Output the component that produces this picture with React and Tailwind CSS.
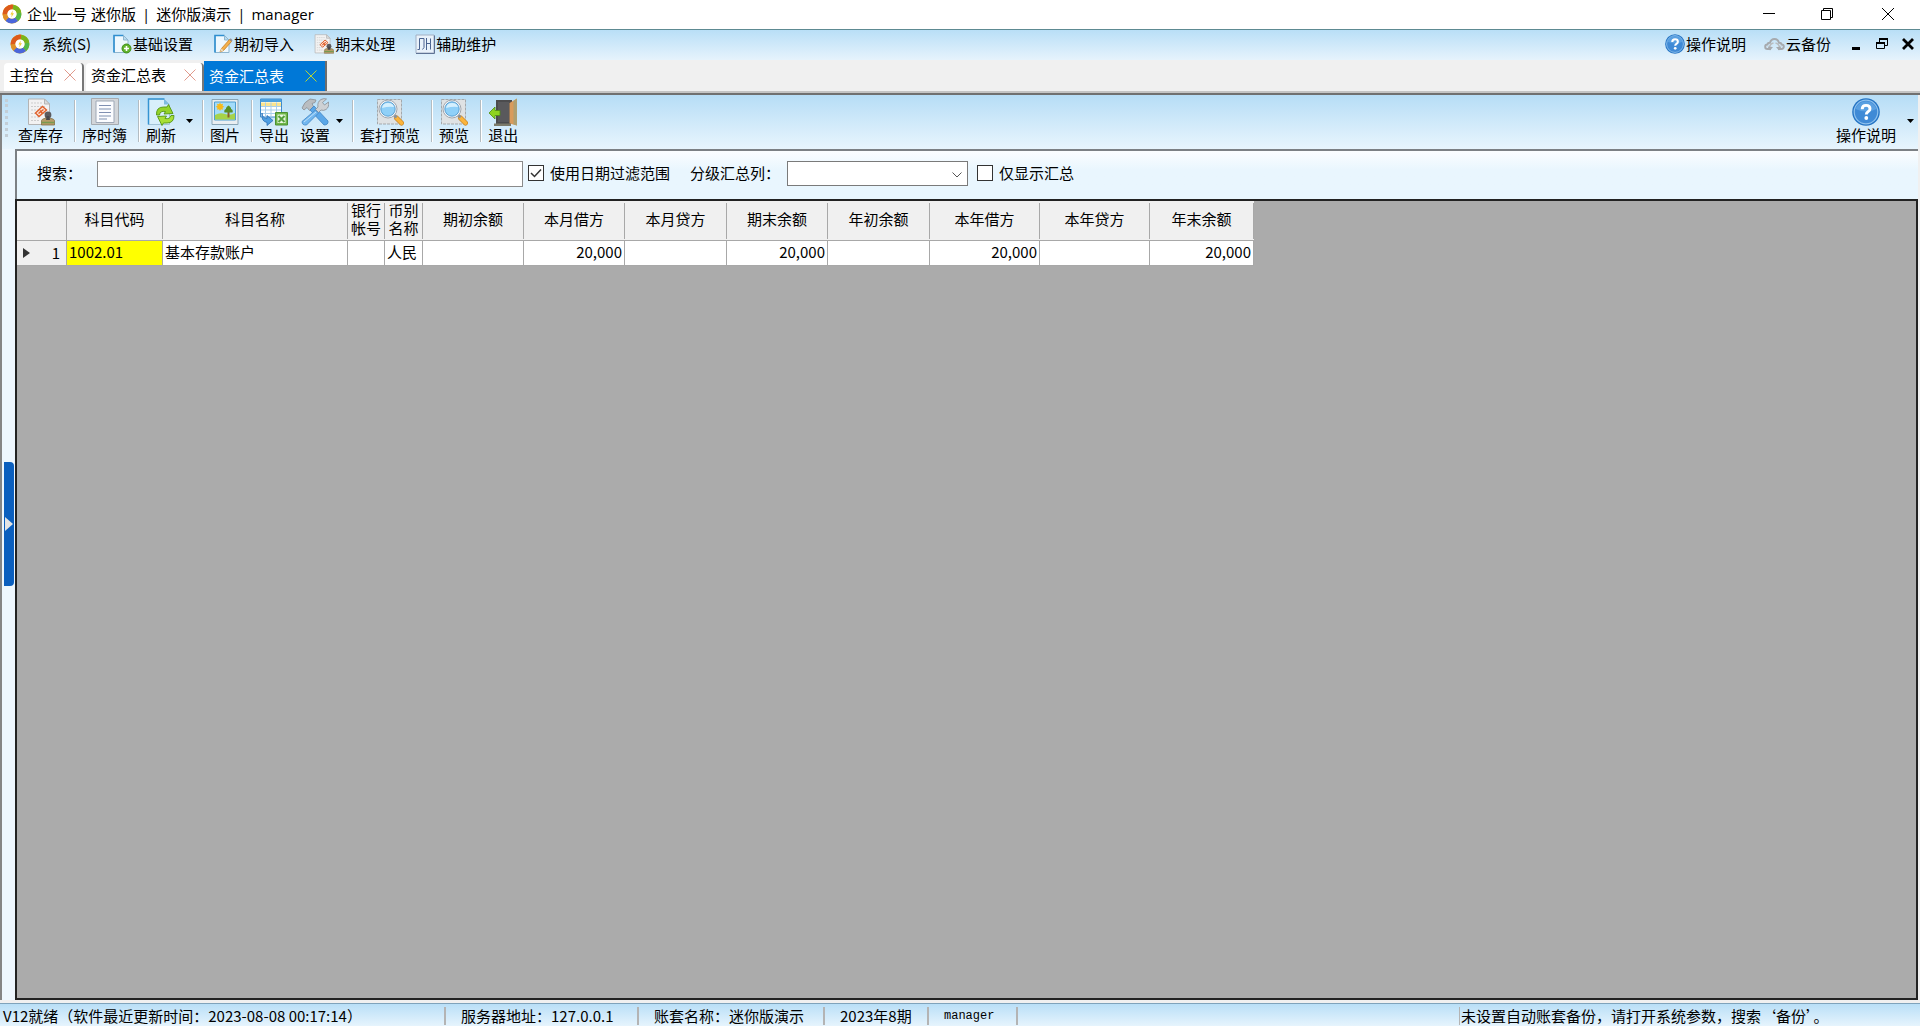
import { useState } from "react";

const columns = [
  { title: "科目代码", width: "w-[96px]" },
  { title: "科目名称", width: "w-[185px]" },
  { title: "银行帐号", width: "w-[37px]" },
  { title: "币别名称", width: "w-[38px]" },
  { title: "期初余额", width: "w-[101px]", number: true },
  { title: "本月借方", width: "w-[101px]", number: true },
  { title: "本月贷方", width: "w-[102px]", number: true },
  { title: "期末余额", width: "w-[101px]", number: true },
  { title: "年初余额", width: "w-[102px]", number: true },
  { title: "本年借方", width: "w-[110px]", number: true },
  { title: "本年贷方", width: "w-[110px]", number: true },
  { title: "年末余额", width: "w-[104px]", number: true },
];

const rows = [
  ["1002.01", "基本存款账户", "", "人民", "", "20,000", "", "20,000", "", "20,000", "", "20,000"],
];

function LogoIcon() {
  return (
    <svg className="size-5 shrink-0" viewBox="0 0 20 20" fill="none" strokeWidth="4.8">
      <circle cx="10" cy="10" r="7" stroke="#e8b21c" />
      <path d="M3 10.500A7 7 0 0 1 11 3.100" stroke="#dc5a1c" />
      <path d="M11 3.100A7 7 0 0 1 16.900 9" stroke="#78b41e" />
      <path d="M16.900 9A7 7 0 0 1 14.500 15.300" stroke="#52b848" />
      <path d="M14.500 15.300A7 7 0 0 1 5 15" stroke="#4a66dc" />
      <path d="M5 15A7 7 0 0 1 3 10.500" stroke="#e0902a" />
      <circle cx="10" cy="10" r="4.600" fill="#fff" />
      <path d="M10.800 6.500 8.300 10.500h1.500l-.6 3 2.800-4.200h-1.600z" fill="#f0cf3a" />
    </svg>
  );
}

function Page({ children }) {
  return (
    <svg className="size-5 shrink-0" viewBox="0 0 20 20">
      <path d="M2 1.500h9.500l4.500 4.500v12.500h-14z" fill="#eef8fe" stroke="#8fb6cf" />
      <path d="M2 18.500v-17h9.500" fill="none" stroke="#2f8fd0" strokeWidth="1.600" />
      <path d="M11.500 1.500v4.500h4.500z" fill="#b7dcf2" stroke="#8fb6cf" />
      {children}
    </svg>
  );
}

function PageAddIcon() {
  return (
    <Page>
      <circle cx="14.500" cy="14.500" r="4.500" fill="#62b32c" stroke="#3f8d1a" />
      <path d="M14.500 12v5M12 14.500h5" stroke="#fff" strokeWidth="1.600" />
    </Page>
  );
}

function PageEditIcon() {
  return (
    <Page>
      <path d="M16.500 5.500 8.500 14.500l-1.500 3.500 3.500-1.500 8-9z" fill="#f4b04a" stroke="#c47c22" strokeWidth=".8" />
      <path d="m16.500 5.500 1.200-1.200 1.900 1.900-1.100 1.300z" fill="#8b8f98" />
      <path d="m8.500 14.500-1.500 3.500 3.500-1.500z" fill="#e9dcc4" />
    </Page>
  );
}

function StampIcon({ className }) {
  return (
    <svg className={className} viewBox="0 0 28 28">
      <path d="M1.500 1h16l5 5v20.500h-21z" fill="#f2f2f2" stroke="#b4b4b4" />
      <path d="M17.500 1v5h5z" fill="#dcdcdc" stroke="#b4b4b4" />
      <path d="M4 5h11M4 8.500h15M4 12h16M4 15.500h15M4 19h9M4 22.500h8" stroke="#cdcdcd" strokeDasharray="2 1" />
      <path d="m8.500 15 7-6.500 4 3.500-7.500 6.500z" fill="#fbe6dc" stroke="#e0602a" strokeWidth="1.400" />
      <path d="m11.500 15.500 5-4M13 12.500l2.500 3" stroke="#e0602a" strokeWidth="1.500" />
      <path d="M14.500 22.500q0-1.500 4.500-2.500l-.5-2.500h4.500l-.5 2.500q5 1 5 2.500v4.500h-13z" fill="#b69b68" stroke="#84704a" strokeWidth=".8" />
      <circle cx="21" cy="17" r="3.400" fill="#5b5b5f" />
      <path d="M19.700 18h2.600l.7 4h-4z" fill="#47474b" />
      <path d="M14.500 24.500h13" stroke="#789a50" strokeWidth="1.400" />
    </svg>
  );
}

function WaveIcon() {
  return (
    <svg className="size-5 shrink-0" viewBox="0 0 20 20" fill="none">
      <path d="M1 1h18v18H1z" fill="#e9f2fb" stroke="#a2b0c4" />
      <path d="M1 19.500h18.500v-18" stroke="#5f7395" />
      <path d="M2.500 15.500h2V4.500h4.500v9l-1.500 2M11.500 4v12M11.500 9.500h4V4.500M15.500 9.500v6" stroke="#4a6390" />
    </svg>
  );
}

function HelpIcon({ className }) {
  return (
    <svg className={className} viewBox="0 0 28 28">
      <circle cx="14" cy="14" r="13.800" fill="#2574c4" />
      <circle cx="14" cy="14" r="11.800" fill="#3f8ad6" stroke="#8fc2ee" strokeWidth="1.200" />
      <path d="M3.500 11a11 11 0 0 1 21 0q-10 5-21 0" fill="#75b5ec" opacity=".5" />
      <path d="M10.200 11.200q0-3.800 3.900-3.800t3.900 3.300q0 1.900-2 3.100-1.700 1-1.700 2.700" fill="none" stroke="#fff" strokeWidth="2.900" />
      <circle cx="14.300" cy="20" r="1.900" fill="#fff" />
    </svg>
  );
}

function CloudIcon() {
  return (
    <svg className="h-5 w-[21px] shrink-0" viewBox="0 0 21 20" fill="none">
      <path d="M7 15H3.500a2.300 2.300 0 0 1 0-4.600q.3-1.600 2.500-1.600Q7 5 10.500 5T15 8.800q2.200 0 2.500 1.600a2.300 2.300 0 0 1 0 4.600H14" stroke="#a6aaae" strokeWidth="2" />
      <path d="M5.500 14q0-4 4-5M15.500 14q0-4-4-5" stroke="#b9bcbf" strokeWidth="1.600" />
      <path d="m3.500 12.500 2.500 4 3-3.500zM17.500 12.500l-2.500 4-3-3.500z" fill="#a6aaae" />
    </svg>
  );
}

function JournalIcon() {
  return (
    <svg className="size-7" viewBox="0 0 28 28">
      <path d="M.5.500h27v26H.5z" fill="#d3d6da" stroke="#a7abb0" />
      <path d="M5 3h18v21.500H5z" fill="#fbfcff" stroke="#9ea8b7" />
      <path d="M8 7.500h12M8 11h12M8 14.500h12M8 18h12M8 21h8" stroke="#7f8fb2" strokeWidth="1.200" />
    </svg>
  );
}

function RefreshIcon() {
  return (
    <svg className="size-7" viewBox="0 0 28 28">
      <path d="M1.500 1H17l5.500 5.500v20h-21z" fill="#d8effb" stroke="#a3c4d8" />
      <path d="M1.500 26.500V1h16" fill="none" stroke="#3594d2" strokeWidth="1.500" />
      <path d="M17 1v5.500h5.500z" fill="#7ebbe0" />
      <path d="M9.500 17q-.5-8 7-8h3.500l1.500-2.500 4.500 9-9 .5 1.500-2.500q-5.500-1-6 3.500z" fill="#94d329" stroke="#529512" strokeWidth=".9" />
      <path d="M27 17.500q0 7.500-7 7.500h-3.500l-1.500 2.500-4.500-9 9-.5-1.500 2.500q5 1 6-3z" fill="#a8df36" stroke="#529512" strokeWidth=".9" />
    </svg>
  );
}

function PictureIcon() {
  return (
    <svg className="size-7" viewBox="0 0 28 28">
      <path d="M1 1.500h26v25H1z" fill="#e9eef1" stroke="#8ba6b6" />
      <path d="M3.500 4h21v18h-21z" fill="#a3dcfa" stroke="#4e9ed0" />
      <path d="M4 17q5-3 10-1t10-1v6.500H4z" fill="#a6d34a" />
      <path d="M9 4.500l1 1.800 2-.5-.5 2 1.800 1-1.800 1 .5 2-2-.5-1 1.800-1-1.800-2 .5.500-2-1.800-1 1.800-1-.5-2 2 .500z" fill="#f8b91a" />
      <path d="M16.500 13.500v6h2v-6" fill="#8a602c" />
      <path d="M17.500 7.500q3 2 2.500 3.500 2.500 1 1.500 3.500h-8q-1-2.500 1.500-3.500-.5-1.500 2.500-3.500" fill="#588f25" />
    </svg>
  );
}

function ExportIcon() {
  return (
    <svg className="size-7" viewBox="0 0 28 28">
      <path d="M.5 1h21v18H.5z" fill="#fff" stroke="#3f8bcb" />
      <path d="M.5 1h21v3H.5z" fill="#4c9fde" />
      <path d="M1 4.500h20V8H1z" fill="#fbe48e" />
      <path d="M5.500 4.500V19M11 4.500V19M16.500 4.500V19M1 8.500h20M1 12h20M1 15.500h20" stroke="#a9cfec" />
      <path d="M2 15q0 5 5 5.500v-3l6 5-6 5v-3q-6-1-5-9.500" fill="#4d9ee2" stroke="#2b70b6" strokeWidth=".8" />
      <path d="M15.500 14.500h12V27h-12z" fill="#6fb548" stroke="#4a9030" />
      <path d="M17.500 16.500h8V25h-8z" fill="#e9f6df" />
      <path d="m18.500 18 6 6M24.500 18l-6 6" stroke="#55a03c" strokeWidth="2" />
    </svg>
  );
}

function ToolsIcon() {
  return (
    <svg className="size-7" viewBox="0 0 28 28">
      <path d="M1 10q2-6 8-9l6 1-1 2.500-3 1 1.500 3-4 4L6 9.500 3 12z" fill="#b9bdc1" stroke="#8a8e93" strokeWidth=".8" />
      <path d="m9 12 4-4L27 23q.5 4-4 4z" fill="#5ba7e8" stroke="#3f84c4" strokeWidth=".8" />
      <path d="M17 9q-1-5 3-7.500 3-1.500 5.500-.5l-4 3.500 2 2.500 4-3q1 5-2.500 7.500-2.500 1.500-5 .5l-2.500 2.500-3-3z" fill="#ced1d4" stroke="#8a8e93" strokeWidth=".8" />
      <path d="m14.500 12 3 3-12 12Q1 27.500 1 23.500z" fill="#72b7ef" stroke="#3f84c4" strokeWidth=".8" />
      <path d="M3 24 15 14" stroke="#bfe1fa" />
    </svg>
  );
}

function PreviewIcon() {
  return (
    <svg className="size-7" viewBox="0 0 28 28">
      <path d="M1.500 1.500h24V26h-24z" fill="#dfe2e4" stroke="#a4a8ab" strokeDasharray="3 1" />
      <path d="M20.500 20 25.500 25" stroke="#c98a2c" strokeWidth="5" strokeLinecap="round" />
      <path d="M20.500 20 25.500 25" stroke="#fbb43c" strokeWidth="3.600" strokeLinecap="round" />
      <path d="m17.500 16.500 3 3" stroke="#8b9299" strokeWidth="2.600" />
      <circle cx="12" cy="11" r="9" fill="#f3f5f7" stroke="#8f969e" strokeWidth=".8" />
      <circle cx="12" cy="11" r="7.200" fill="#8fd0f8" stroke="#4590c8" strokeWidth=".8" />
      <path d="M6 10q1-5 6-5 5 .2 6 4-5-1-12 1" fill="#d5f0fe" />
    </svg>
  );
}

function ExitIcon() {
  return (
    <svg className="size-7" viewBox="0 0 28 28">
      <path d="M7 2h16v24H7z" fill="#4b4b4d" />
      <path d="M9 4h11v20H9z" fill="#59595c" />
      <path d="M20.500 5 28 .500v27l-7.500-2z" fill="#d99b5c" />
      <path d="M24.500 3 28 .500v27l-3.500-1z" fill="#b0a070" />
      <path d="M5 25.500h17V28H5z" fill="#7c7a6a" />
      <path d="M0 15 6 9v3.500h5v5H6V21z" fill="#8ed321" stroke="#4c8e10" strokeWidth=".8" />
    </svg>
  );
}

function Triangle() {
  return (
    <svg className="h-1 w-[7px]" viewBox="0 0 7 4">
      <path d="M0 0h7L3.500 4z" fill="#000" />
    </svg>
  );
}

function MenuItem({ icon, label }) {
  return (
    <button type="button" className="flex items-center gap-px whitespace-nowrap">
      {icon}
      {label}
    </button>
  );
}

function Tab({ label, active, onSelect, className }) {
  return (
    <div
      className={`flex justify-between pl-[5px] ${className} ${
        active ? "h-[30px] items-center border-r-2 border-[#6d6d6d] bg-[#0078d7] pr-2 text-white" : "h-7 items-center rounded-t-sm border-r-2 border-[#777] bg-white pr-[6px] pb-1"
      }`}
    >
      <button type="button" onClick={onSelect}>{label}</button>
      <button type="button" aria-label={`关闭${label}`}>
        <svg className="size-3" viewBox="0 0 12 12" stroke={active ? "#b9d432" : "#e09a8c"}>
          <path d="m.5.500 11 11M11.500.500l-11 11" />
        </svg>
      </button>
    </div>
  );
}

function ToolButton({ icon, label }) {
  return (
    <button type="button" className="flex flex-col items-center gap-px whitespace-nowrap">
      {icon}
      <span className="leading-4">{label}</span>
    </button>
  );
}

function DropArrow({ className, label }) {
  return (
    <button type="button" aria-label={label} className={`flex h-[46px] items-center justify-center ${className}`}>
      <Triangle />
    </button>
  );
}

function Separator({ className = "ml-[11px]" }) {
  return <div className={`mt-0.5 mr-[6px] h-[42px] w-0.5 shrink-0 border-r border-l border-r-white border-l-[#b3bcc2] ${className}`} />;
}

function CheckBox({ label, checked, onChange }) {
  return (
    <label className="flex items-center gap-[6px] whitespace-nowrap">
      <span className="relative flex size-4">
        <input
          type="checkbox"
          checked={checked}
          onChange={(e) => onChange(e.target.checked)}
          className="size-4 appearance-none border border-[#333] bg-white"
        />
        {checked && (
          <svg className="pointer-events-none absolute inset-0 size-4" viewBox="0 0 16 16" fill="none">
            <path d="m3 8 3.500 3.500L13 4.500" stroke="#333" strokeWidth="1.500" />
          </svg>
        )}
      </span>
      {label}
    </label>
  );
}

function TitleBar() {
  return (
    <header className="flex h-[29px] shrink-0 items-center bg-white pb-0.5 pl-0.5 font-['Open_Sans','Noto_Sans_CJK_SC',sans-serif]">
      <LogoIcon />
      <h1 className="ml-[5px] flex gap-[6px] whitespace-nowrap">
        <span>企业一号 迷你版</span>
        <span>|</span>
        <span>迷你版演示</span>
        <span>|</span>
        <span>manager</span>
      </h1>
      <div className="ml-auto flex">
        <button type="button" aria-label="最小化" className="flex w-[58px] justify-center">
          <svg className="size-3" viewBox="0 0 12 12" stroke="#000"><path d="M0 5.500h12" /></svg>
        </button>
        <button type="button" aria-label="还原" className="flex w-[58px] justify-center">
          <svg className="size-3" viewBox="0 0 12 12" fill="none" stroke="#000"><path d="M.5 2.500h9v9h-9zM2.500 2.500v-2h9v9h-2" /></svg>
        </button>
        <button type="button" aria-label="关闭" className="flex w-16 justify-center">
          <svg className="size-3" viewBox="0 0 12 12" stroke="#000"><path d="m0 0 12 12M12 0 0 12" /></svg>
        </button>
      </div>
    </header>
  );
}

function MenuBar() {
  return (
    <nav className="flex h-[31px] shrink-0 items-center border-t border-[#5d8a92] bg-linear-to-b from-[#b9dff7] to-[#e6f3fc] pb-0.5 pl-2.5">
      <LogoIcon />
      <button type="button" className="ml-3 whitespace-nowrap">系统(S)</button>
      <div className="ml-[21px] flex gap-5">
        <MenuItem icon={<PageAddIcon />} label="基础设置" />
        <MenuItem icon={<PageEditIcon />} label="期初导入" />
        <MenuItem icon={<StampIcon className="size-5 shrink-0" />} label="期末处理" />
        <MenuItem icon={<WaveIcon />} label="辅助维护" />
      </div>
      <div className="ml-auto flex items-center gap-[18px] pr-[6px]">
        <MenuItem icon={<HelpIcon className="size-5 shrink-0" />} label="操作说明" />
        <MenuItem icon={<CloudIcon />} label="云备份" />
        <div className="ml-px flex gap-[14px]">
          <button type="button" aria-label="最小化窗口">
            <svg className="size-3" viewBox="0 0 12 12"><path d="M2 9h8v3H2z" /></svg>
          </button>
          <button type="button" aria-label="还原窗口">
            <svg className="size-3" viewBox="0 0 12 12" fill="none" stroke="#000"><path d="M.5 5.500h8v5h-8zM3.500 5V1.500h8v6H9" /><path d="M0 5h9M3 1h9" strokeWidth="2" /></svg>
          </button>
          <button type="button" aria-label="关闭窗口">
            <svg className="size-3" viewBox="0 0 12 12" stroke="#000" strokeWidth="2.800"><path d="m1 1 10 10M11 1 1 11" /></svg>
          </button>
        </div>
      </div>
    </nav>
  );
}

function Toolbar() {
  return (
    <div className="flex h-[54px] shrink-0 items-start bg-linear-to-b from-[#b6ddf6] to-[#e8f5fd] pt-[3px] pl-[3px]">
      <div className="mt-px mr-2.5 h-[38px] border-l-3 border-dotted border-[#c3ced6]" />
      <ToolButton icon={<StampIcon className="size-7" />} label="查库存" />
      <Separator />
      <ToolButton icon={<JournalIcon />} label="序时簿" />
      <Separator />
      <ToolButton icon={<RefreshIcon />} label="刷新" />
      <DropArrow className="w-[26px]" label="刷新选项" />
      <Separator className="ml-0" />
      <ToolButton icon={<PictureIcon />} label="图片" />
      <Separator />
      <ToolButton icon={<ExportIcon />} label="导出" />
      <div className="w-[11px]" />
      <ToolButton icon={<ToolsIcon />} label="设置" />
      <DropArrow className="w-[22px] pr-1" label="设置选项" />
      <Separator className="ml-0" />
      <ToolButton icon={<PreviewIcon />} label="套打预览" />
      <Separator />
      <ToolButton icon={<PreviewIcon />} label="预览" />
      <Separator />
      <ToolButton icon={<ExitIcon />} label="退出" />
      <div className="ml-auto flex">
        <ToolButton icon={<HelpIcon className="size-7" />} label="操作说明" />
        <DropArrow className="w-[22px] pl-1.5" label="更多" />
      </div>
    </div>
  );
}

function FilterBar() {
  const [useDate, setUseDate] = useState(true);
  const [onlyTotal, setOnlyTotal] = useState(false);

  return (
    <form className="flex h-[50px] shrink-0 items-start border-t-2 border-l-2 border-[#7c8084] bg-linear-to-b from-[#fbfdff] to-[#e9f6fe] to-40% pt-2.5 pl-5">
      <label htmlFor="search" className="w-[60px] leading-6 whitespace-nowrap">搜索：</label>
      <input id="search" type="text" className="h-[26px] w-[426px] border border-[#8a8a8a] bg-white px-1 outline-none" />
      <div className="ml-[5px] flex h-[23px] items-center">
        <CheckBox label="使用日期过滤范围" checked={useDate} onChange={setUseDate} />
      </div>
      <label htmlFor="level" className="ml-5 w-[97px] leading-6 whitespace-nowrap">分级汇总列：</label>
      <div className="relative">
        <select id="level" className="h-[25px] w-[181px] appearance-none border border-[#7a7a7a] bg-white px-1 outline-none">
          <option value=""></option>
        </select>
        <svg className="pointer-events-none absolute top-[11px] right-[6px] h-[6px] w-2.5" viewBox="0 0 10 6" fill="none" stroke="#555">
          <path d="m.5.500 4.500 4.500L9.500.500" />
        </svg>
      </div>
      <div className="ml-[9px] flex h-[23px] items-center">
        <CheckBox label="仅显示汇总" checked={onlyTotal} onChange={setOnlyTotal} />
      </div>
    </form>
  );
}

function SummaryTable() {
  return (
    <table className="w-[1237px] table-fixed border-separate border-spacing-0">
      <colgroup>
        <col className="w-[50px]" />
        {columns.map((c) => <col key={c.title} className={c.width} />)}
      </colgroup>
      <thead>
        <tr className="h-10 bg-[#f0f0f0]">
          <th className="border-r border-b border-[#a8a8a8] p-0" aria-label="行号" />
          {columns.map((c) => (
            <th key={c.title} scope="col" className="border-b border-[#a8a8a8] p-0 font-normal">
              <div className="flex h-9 items-center justify-center border-r border-[#a8a8a8] px-[3px] pb-1 leading-[18px]">{c.title}</div>
            </th>
          ))}
        </tr>
      </thead>
      <tbody>
        {rows.map((row, i) => (
          <tr key={row[0]} className="h-[25px] bg-white">
            <th scope="row" className="border-r border-b border-[#a8a8a8] bg-[#f0f0f0] p-0 font-normal">
              <div className="flex items-center justify-between pr-[6px] pl-[6px]">
                <svg className="h-2.5 w-[7px]" viewBox="0 0 7 10"><path d="M0 0v10l7-5z" fill="#333" /></svg>
                {i + 1}
              </div>
            </th>
            {row.map((cell, j) => (
              <td
                key={columns[j].title}
                className={`overflow-hidden border-r border-b border-[#a8a8a8] px-0.5 pt-0 pb-0.5 leading-5 whitespace-nowrap ${
                  columns[j].number ? "text-right" : "text-left"
                } ${j === 0 ? "bg-[#ffff00]" : ""}`}
              >
                {cell}
              </td>
            ))}
          </tr>
        ))}
      </tbody>
    </table>
  );
}

function StatusBar() {
  return (
    <footer className="flex h-[23px] shrink-0 items-center border-t border-[#7fa3bb] bg-linear-to-b from-[#b9dff7] to-[#e6f4fd] pt-0.5 leading-[18px] whitespace-nowrap">
      <div className="w-[444px] pl-[3px]">V12就绪（软件最近更新时间：2023-08-08 00:17:14）</div>
      <div className="w-[193px] border-l-2 border-[#b4b4b4] pl-[15px]">服务器地址：127.0.0.1</div>
      <div className="w-[186px] border-l-2 border-[#b4b4b4] pl-[15px]">账套名称：迷你版演示</div>
      <div className="w-[104px] border-l-2 border-[#b4b4b4] pl-[15px]">2023年8期</div>
      <div className="w-[89px] border-l-2 border-[#b4b4b4] pl-[15px] font-['Liberation_Mono',monospace] text-[12px]">manager</div>
      <div className="flex-1 border-l-2 border-[#b4b4b4]">&nbsp;</div>
      <div className="w-[461px] border-l border-[#b4b4b4] pl-px">未设置自动账套备份，请打开系统参数，搜索‘备份’。</div>
    </footer>
  );
}

export default function App() {
  const [active, setActive] = useState(2);

  return (
    <div className="flex h-screen flex-col overflow-hidden bg-[#f0f0f0] font-['Noto_Sans_CJK_SC',sans-serif] text-[15px] leading-5 text-black">
      <TitleBar />
      <MenuBar />
      <div className="flex h-[31px] shrink-0 items-end pl-1">
        <Tab label="主控台" className="w-20" active={active === 0} onSelect={() => setActive(0)} />
        <Tab label="资金汇总表" className="ml-0.5 w-[118px]" active={active === 1} onSelect={() => setActive(1)} />
        <Tab label="资金汇总表" className="w-[123px]" active={active === 2} onSelect={() => setActive(2)} />
      </div>
      <div className="h-1 shrink-0 border-b-2 border-[#707070] bg-[#c4c4c4]" />
      <main className="flex min-h-0 flex-1 flex-col border-r-2 border-l-2 border-r-[#f0f0f0] border-l-[#858585]">
        <Toolbar />
        <div className="flex min-h-0 flex-1">
          <aside className="flex w-[13px] shrink-0 bg-[#eef7fe] pt-[313px] pr-px pl-0.5">
            <button type="button" aria-label="展开导航" className="flex h-[124px] w-full items-center justify-center rounded-r bg-[#0b5fbe]">
              <svg className="h-[14px] w-2" viewBox="0 0 8 14"><path d="M0 0v14l8-7z" fill="#e4e4e4" /></svg>
            </button>
          </aside>
          <div className="flex min-w-0 flex-1 flex-col">
            <FilterBar />
            <div className="min-h-0 flex-1 overflow-hidden border-2 border-[#222] bg-[#ababab]">
              <SummaryTable />
            </div>
          </div>
        </div>
      </main>
      <div className="h-[3px] shrink-0" />
      <StatusBar />
    </div>
  );
}
